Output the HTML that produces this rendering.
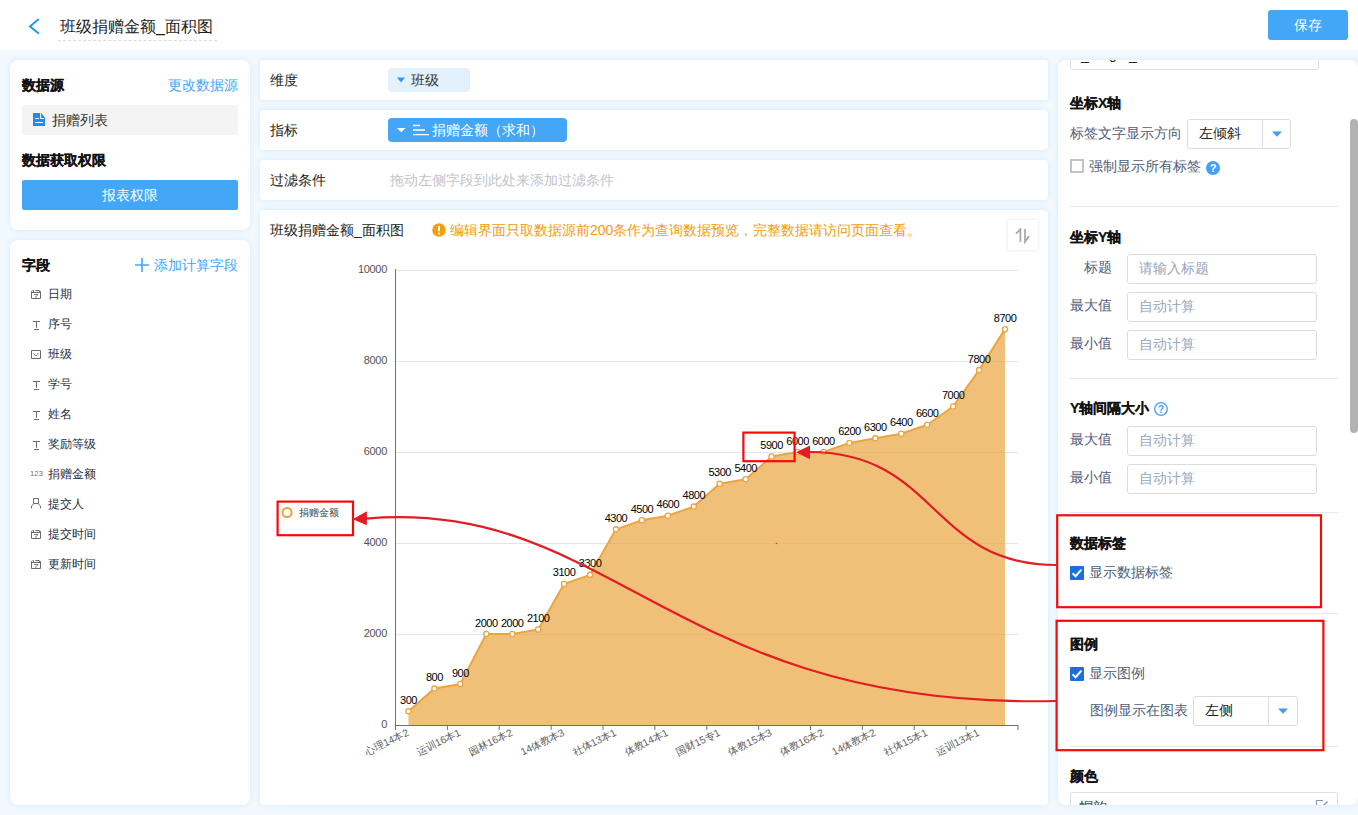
<!DOCTYPE html>
<html><head><meta charset="utf-8">
<style>
*{margin:0;padding:0;box-sizing:border-box}
html,body{width:1358px;height:815px;overflow:hidden}
body{background:#f2f9fe;font-family:"Liberation Sans",sans-serif;font-size:14px;color:#333;position:relative}
.a{position:absolute;white-space:nowrap}
.card{position:absolute;background:#fff;box-shadow:0 0 6px rgba(0,140,255,0.13)}
.hdr{position:absolute;left:0;top:0;width:1358px;height:50px;background:#fff}
.btn{position:absolute;background:#43a6f7;color:#fff;text-align:center;border-radius:3px}
.bold{font-weight:bold;color:#111;-webkit-text-stroke:0.2px #111}
.fld{position:absolute;left:48px;font-size:12px;color:#1f2d3d;line-height:14px}
.ic{position:absolute;left:30px}
.lbl{color:#4e5d7a}
.inp{position:absolute;border:1px solid #dcdcdc;border-radius:3px;background:#fff}
.ph{position:absolute;color:#97a5bd;font-size:14px}
.div{position:absolute;height:1px;background:#e6e9ee;left:1070px;width:268px}
.chk{position:absolute;width:14px;height:14px;border-radius:2px}
</style></head><body>

<!-- header -->
<div class="hdr"></div>
<svg class="a" style="left:26px;top:16px" width="16" height="20" viewBox="0 0 16 20"><path d="M12.2 3.6 L4 10.4 L12.2 17.1" fill="none" stroke="#2196f3" stroke-width="2" stroke-linecap="round" stroke-linejoin="miter"/></svg>
<div class="a" style="left:60px;top:16.5px;font-size:16px;line-height:20px;color:#222">班级捐赠金额_面积图</div>
<div class="a" style="left:58px;top:40px;width:159px;height:0;border-top:1px dashed #dcdcdc"></div>
<div class="btn" style="left:1268px;top:10px;width:80px;height:30px;line-height:30px">保存</div>

<!-- left card 1 -->
<div class="card" style="left:10px;top:60px;width:240px;height:170px;border-radius:8px"></div>
<div class="a bold" style="left:22px;top:77px;line-height:16px">数据源</div>
<div class="a" style="left:168px;top:77px;line-height:16px;color:#43a6f7">更改数据源</div>
<div class="a" style="left:22px;top:105px;width:216px;height:30px;background:#f4f4f5;border-radius:2px"></div>
<svg class="a" style="left:33px;top:113px" width="12" height="13" viewBox="0 0 12 13"><path d="M0 0H8.2L12 4.8V13H0Z" fill="#1a8cf7"/><path d="M7.6 0V5.5H11M2.1 5.5H5.9M2.1 9.5H10" fill="none" stroke="#fff" stroke-width="1"/></svg>
<div class="a" style="left:52px;top:112px;line-height:16px;color:#333">捐赠列表</div>
<div class="a bold" style="left:22px;top:152px;line-height:16px">数据获取权限</div>
<div class="btn" style="left:22px;top:180px;width:216px;height:30px;line-height:30px;border-radius:2px">报表权限</div>

<!-- left card 2 -->
<div class="card" style="left:10px;top:240px;width:240px;height:565px;border-radius:8px"></div>
<div class="a bold" style="left:22px;top:257px;line-height:16px">字段</div>
<svg class="a" style="left:135px;top:258px" width="14" height="14" viewBox="0 0 14 14"><path d="M7 0V14M0 7H14" stroke="#43a6f7" stroke-width="1.6"/></svg>
<div class="a" style="left:154px;top:257px;line-height:16px;color:#43a6f7">添加计算字段</div>

<div class="fld" style="top:287px">日期</div>
<svg class="a" style="left:31px;top:290px" width="11" height="10" viewBox="0 0 11 10"><path d="M0.5 1.2V8.5H9.5V1.2M0.5 2.5H9.5M4.5 0.5H8" fill="none" stroke="#6b6b6b" stroke-width="1"/><path d="M1.5 0.5H2.5V2M8.5 0.5V2" fill="none" stroke="#6b6b6b" stroke-width="1"/><path d="M3 4.5H7L5.5 6.3M4.8 6.3V8.3" fill="none" stroke="#6b6b6b" stroke-width="0.9"/></svg>
<div class="fld" style="top:317px">序号</div>
<svg class="a" style="left:32px;top:321px" width="9" height="10" viewBox="0 0 9 10"><path d="M0.8 0.5H8M4.5 0.5V6.8M2 8.5H7" fill="none" stroke="#6b6b6b" stroke-width="1"/></svg>
<div class="fld" style="top:347px">班级</div>
<svg class="a" style="left:31px;top:350px" width="11" height="10" viewBox="0 0 11 10"><path d="M0.5 0.5H9.5V8.5H0.5Z" fill="none" stroke="#6b6b6b" stroke-width="1"/><path d="M2.3 3.5L4.5 5.5H5.8L6.8 4.5V3" fill="none" stroke="#6b6b6b" stroke-width="0.9"/></svg>
<div class="fld" style="top:377px">学号</div>
<svg class="a" style="left:32px;top:381px" width="9" height="10" viewBox="0 0 9 10"><path d="M0.8 0.5H8M4.5 0.5V6.8M2 8.5H7" fill="none" stroke="#6b6b6b" stroke-width="1"/></svg>
<div class="fld" style="top:407px">姓名</div>
<svg class="a" style="left:32px;top:411px" width="9" height="10" viewBox="0 0 9 10"><path d="M0.8 0.5H8M4.5 0.5V6.8M2 8.5H7" fill="none" stroke="#6b6b6b" stroke-width="1"/></svg>
<div class="fld" style="top:437px">奖励等级</div>
<svg class="a" style="left:32px;top:441px" width="9" height="10" viewBox="0 0 9 10"><path d="M0.8 0.5H8M4.5 0.5V6.8M2 8.5H7" fill="none" stroke="#6b6b6b" stroke-width="1"/></svg>
<div class="fld" style="top:467px">捐赠金额</div>
<div class="a" style="left:30px;top:469px;font-size:7.5px;line-height:9px;color:#6b6b6b;letter-spacing:0.2px">123</div>
<div class="fld" style="top:497px">提交人</div>
<svg class="a" style="left:31px;top:498px" width="11" height="12" viewBox="0 0 11 12"><path d="M2.5 0.5H7.5V5.5H2.5Z" fill="none" stroke="#6b6b6b" stroke-width="1"/><path d="M0.5 10.5V8L2.8 5.8M7.2 5.8L9.5 8V10.5" fill="none" stroke="#6b6b6b" stroke-width="1"/></svg>
<div class="fld" style="top:527px">提交时间</div>
<svg class="a" style="left:31px;top:530px" width="11" height="10" viewBox="0 0 11 10"><path d="M0.5 1.2V8.5H9.5V1.2M0.5 2.5H9.5M4.5 0.5H8" fill="none" stroke="#6b6b6b" stroke-width="1"/><path d="M1.5 0.5H2.5V2M8.5 0.5V2" fill="none" stroke="#6b6b6b" stroke-width="1"/><path d="M3 4.5H7L5.5 6.3M4.8 6.3V8.3" fill="none" stroke="#6b6b6b" stroke-width="0.9"/></svg>
<div class="fld" style="top:557px">更新时间</div>
<svg class="a" style="left:31px;top:560px" width="11" height="10" viewBox="0 0 11 10"><path d="M0.5 1.2V8.5H9.5V1.2M0.5 2.5H9.5M4.5 0.5H8" fill="none" stroke="#6b6b6b" stroke-width="1"/><path d="M1.5 0.5H2.5V2M8.5 0.5V2" fill="none" stroke="#6b6b6b" stroke-width="1"/><path d="M3 4.5H7L5.5 6.3M4.8 6.3V8.3" fill="none" stroke="#6b6b6b" stroke-width="0.9"/></svg>

<!-- middle rows -->
<div class="card" style="left:260px;top:60px;width:788px;height:40px;border-radius:4px"></div>
<div class="a" style="left:270px;top:72px;line-height:16px;color:#222">维度</div>
<div class="a" style="left:388px;top:68px;width:82px;height:24px;background:#e3f1fd;border-radius:4px"></div>
<svg class="a" style="left:397px;top:77px" width="8" height="6"><path d="M0 0.5H8L4 5.5Z" fill="#2b9af3"/></svg>
<div class="a" style="left:411px;top:72px;line-height:16px;color:#333">班级</div>

<div class="card" style="left:260px;top:110px;width:788px;height:40px;border-radius:4px"></div>
<div class="a" style="left:270px;top:122px;line-height:16px;color:#222">指标</div>
<div class="a" style="left:388px;top:118px;width:179px;height:24px;background:#43a6f7;border-radius:4px"></div>
<svg class="a" style="left:396.5px;top:127px" width="9" height="6"><path d="M0 1H8.6L4.3 5.2Z" fill="#fff"/></svg>
<svg class="a" style="left:412px;top:124px" width="18" height="12"><path d="M1 1.5H8M1 6H13M1 10.6H17" stroke="#fff" stroke-width="1.3"/></svg>
<div class="a" style="left:432px;top:122px;line-height:16px;color:#fff">捐赠金额<span style="letter-spacing:0">（求和）</span></div>

<div class="card" style="left:260px;top:160px;width:788px;height:40px;border-radius:4px"></div>
<div class="a" style="left:270px;top:172px;line-height:16px;color:#222">过滤条件</div>
<div class="a" style="left:390px;top:172px;line-height:16px;color:#c0c4cc">拖动左侧字段到此处来添加过滤条件</div>

<!-- chart card -->
<div class="card" style="left:260px;top:210px;width:788px;height:595px;border-radius:4px"></div>
<div class="a" style="left:270px;top:222px;line-height:16px;color:#222">班级捐赠金额_面积图</div>
<svg class="a" style="left:432px;top:223px" width="14" height="14" viewBox="0 0 14 14"><circle cx="7" cy="7" r="6.8" fill="#f59e0b"/><path d="M7 3V8.3" stroke="#fff" stroke-width="2"/><circle cx="7" cy="10.6" r="1.1" fill="#fff"/></svg>
<div class="a" style="left:450px;top:222px;line-height:16px;color:#f29d0b">编辑界面只取数据源前200条作为查询数据预览，完整数据请访问页面查看。</div>
<div class="a" style="left:1008px;top:220px;width:30px;height:30px;background:#fff;box-shadow:0 0 3px rgba(0,0,0,0.12)"></div>
<svg class="a" style="left:1014px;top:228px" width="18" height="16"><path d="M2 5.6L6.4 1.2V14M11 1V14L15 8" fill="none" stroke="#a6a6a6" stroke-width="1.7"/></svg>

<svg id="chart" class="a" style="left:0;top:0;font-family:'Liberation Sans',sans-serif" width="1358" height="815">
<path d="M395.5 634.5H1018" stroke="#e0e6f1" stroke-width="1"/>
<path d="M395.5 543.5H1018" stroke="#e0e6f1" stroke-width="1"/>
<path d="M395.5 452.5H1018" stroke="#e0e6f1" stroke-width="1"/>
<path d="M395.5 361.5H1018" stroke="#e0e6f1" stroke-width="1"/>
<path d="M395.5 270.5H1018" stroke="#e0e6f1" stroke-width="1"/>
<path d="M408.47 725 L408.47 711.35 L434.41 688.60 L460.34 684.05 L486.28 634.00 L512.22 634.00 L538.16 629.45 L564.09 583.95 L590.03 574.85 L615.97 529.35 L641.91 520.25 L667.84 515.70 L693.78 506.60 L719.72 483.85 L745.66 479.30 L771.59 456.55 L797.53 452.00 L823.47 452.00 L849.41 442.90 L875.34 438.35 L901.28 433.80 L927.22 424.70 L953.16 406.50 L979.09 370.10 L1005.03 329.15 L1005.03 725Z" fill="#eaa540" fill-opacity="0.7"/>
<path d="M408.47 711.35 L434.41 688.60 L460.34 684.05 L486.28 634.00 L512.22 634.00 L538.16 629.45 L564.09 583.95 L590.03 574.85 L615.97 529.35 L641.91 520.25 L667.84 515.70 L693.78 506.60 L719.72 483.85 L745.66 479.30 L771.59 456.55 L797.53 452.00 L823.47 452.00 L849.41 442.90 L875.34 438.35 L901.28 433.80 L927.22 424.70 L953.16 406.50 L979.09 370.10 L1005.03 329.15" fill="none" stroke="#eaa540" stroke-width="2" stroke-linejoin="round"/>
<circle cx="408.47" cy="711.35" r="2.6" fill="#fff" stroke="#eaa540" stroke-width="1.3"/>
<circle cx="434.41" cy="688.60" r="2.6" fill="#fff" stroke="#eaa540" stroke-width="1.3"/>
<circle cx="460.34" cy="684.05" r="2.6" fill="#fff" stroke="#eaa540" stroke-width="1.3"/>
<circle cx="486.28" cy="634.00" r="2.6" fill="#fff" stroke="#eaa540" stroke-width="1.3"/>
<circle cx="512.22" cy="634.00" r="2.6" fill="#fff" stroke="#eaa540" stroke-width="1.3"/>
<circle cx="538.16" cy="629.45" r="2.6" fill="#fff" stroke="#eaa540" stroke-width="1.3"/>
<circle cx="564.09" cy="583.95" r="2.6" fill="#fff" stroke="#eaa540" stroke-width="1.3"/>
<circle cx="590.03" cy="574.85" r="2.6" fill="#fff" stroke="#eaa540" stroke-width="1.3"/>
<circle cx="615.97" cy="529.35" r="2.6" fill="#fff" stroke="#eaa540" stroke-width="1.3"/>
<circle cx="641.91" cy="520.25" r="2.6" fill="#fff" stroke="#eaa540" stroke-width="1.3"/>
<circle cx="667.84" cy="515.70" r="2.6" fill="#fff" stroke="#eaa540" stroke-width="1.3"/>
<circle cx="693.78" cy="506.60" r="2.6" fill="#fff" stroke="#eaa540" stroke-width="1.3"/>
<circle cx="719.72" cy="483.85" r="2.6" fill="#fff" stroke="#eaa540" stroke-width="1.3"/>
<circle cx="745.66" cy="479.30" r="2.6" fill="#fff" stroke="#eaa540" stroke-width="1.3"/>
<circle cx="771.59" cy="456.55" r="2.6" fill="#fff" stroke="#eaa540" stroke-width="1.3"/>
<circle cx="797.53" cy="452.00" r="2.6" fill="#fff" stroke="#eaa540" stroke-width="1.3"/>
<circle cx="823.47" cy="452.00" r="2.6" fill="#fff" stroke="#eaa540" stroke-width="1.3"/>
<circle cx="849.41" cy="442.90" r="2.6" fill="#fff" stroke="#eaa540" stroke-width="1.3"/>
<circle cx="875.34" cy="438.35" r="2.6" fill="#fff" stroke="#eaa540" stroke-width="1.3"/>
<circle cx="901.28" cy="433.80" r="2.6" fill="#fff" stroke="#eaa540" stroke-width="1.3"/>
<circle cx="927.22" cy="424.70" r="2.6" fill="#fff" stroke="#eaa540" stroke-width="1.3"/>
<circle cx="953.16" cy="406.50" r="2.6" fill="#fff" stroke="#eaa540" stroke-width="1.3"/>
<circle cx="979.09" cy="370.10" r="2.6" fill="#fff" stroke="#eaa540" stroke-width="1.3"/>
<circle cx="1005.03" cy="329.15" r="2.6" fill="#fff" stroke="#eaa540" stroke-width="1.3"/>
<path d="M395.5 269V725" stroke="#6e7079" stroke-width="1"/>
<path d="M395.5 725.5H1018" stroke="#6e7079" stroke-width="1"/>
<path d="M395.5 725V730" stroke="#6e7079" stroke-width="1"/>
<path d="M447.4 725V730" stroke="#6e7079" stroke-width="1"/>
<path d="M499.2 725V730" stroke="#6e7079" stroke-width="1"/>
<path d="M551.1 725V730" stroke="#6e7079" stroke-width="1"/>
<path d="M603.0 725V730" stroke="#6e7079" stroke-width="1"/>
<path d="M654.9 725V730" stroke="#6e7079" stroke-width="1"/>
<path d="M706.8 725V730" stroke="#6e7079" stroke-width="1"/>
<path d="M758.6 725V730" stroke="#6e7079" stroke-width="1"/>
<path d="M810.5 725V730" stroke="#6e7079" stroke-width="1"/>
<path d="M862.4 725V730" stroke="#6e7079" stroke-width="1"/>
<path d="M914.2 725V730" stroke="#6e7079" stroke-width="1"/>
<path d="M966.1 725V730" stroke="#6e7079" stroke-width="1"/>
<path d="M1018.0 725V730" stroke="#6e7079" stroke-width="1"/>
<text x="387" y="728.3" text-anchor="end" font-size="11" fill="#555" letter-spacing="-0.3">0</text>
<text x="387" y="637.3" text-anchor="end" font-size="11" fill="#555" letter-spacing="-0.3">2000</text>
<text x="387" y="546.3" text-anchor="end" font-size="11" fill="#555" letter-spacing="-0.3">4000</text>
<text x="387" y="455.3" text-anchor="end" font-size="11" fill="#555" letter-spacing="-0.3">6000</text>
<text x="387" y="364.3" text-anchor="end" font-size="11" fill="#555" letter-spacing="-0.3">8000</text>
<text x="387" y="273.3" text-anchor="end" font-size="11" fill="#555" letter-spacing="-0.3">10000</text>
<text x="408.47" y="703.85" text-anchor="middle" font-size="11" fill="#000" letter-spacing="-0.5">300</text>
<text x="434.41" y="681.10" text-anchor="middle" font-size="11" fill="#000" letter-spacing="-0.5">800</text>
<text x="460.34" y="676.55" text-anchor="middle" font-size="11" fill="#000" letter-spacing="-0.5">900</text>
<text x="486.28" y="626.50" text-anchor="middle" font-size="11" fill="#000" letter-spacing="-0.5">2000</text>
<text x="512.22" y="626.50" text-anchor="middle" font-size="11" fill="#000" letter-spacing="-0.5">2000</text>
<text x="538.16" y="621.95" text-anchor="middle" font-size="11" fill="#000" letter-spacing="-0.5">2100</text>
<text x="564.09" y="576.45" text-anchor="middle" font-size="11" fill="#000" letter-spacing="-0.5">3100</text>
<text x="590.03" y="567.35" text-anchor="middle" font-size="11" fill="#000" letter-spacing="-0.5">3300</text>
<text x="615.97" y="521.85" text-anchor="middle" font-size="11" fill="#000" letter-spacing="-0.5">4300</text>
<text x="641.91" y="512.75" text-anchor="middle" font-size="11" fill="#000" letter-spacing="-0.5">4500</text>
<text x="667.84" y="508.20" text-anchor="middle" font-size="11" fill="#000" letter-spacing="-0.5">4600</text>
<text x="693.78" y="499.10" text-anchor="middle" font-size="11" fill="#000" letter-spacing="-0.5">4800</text>
<text x="719.72" y="476.35" text-anchor="middle" font-size="11" fill="#000" letter-spacing="-0.5">5300</text>
<text x="745.66" y="471.80" text-anchor="middle" font-size="11" fill="#000" letter-spacing="-0.5">5400</text>
<text x="771.59" y="449.05" text-anchor="middle" font-size="11" fill="#000" letter-spacing="-0.5">5900</text>
<text x="797.53" y="444.50" text-anchor="middle" font-size="11" fill="#000" letter-spacing="-0.5">6000</text>
<text x="823.47" y="444.50" text-anchor="middle" font-size="11" fill="#000" letter-spacing="-0.5">6000</text>
<text x="849.41" y="435.40" text-anchor="middle" font-size="11" fill="#000" letter-spacing="-0.5">6200</text>
<text x="875.34" y="430.85" text-anchor="middle" font-size="11" fill="#000" letter-spacing="-0.5">6300</text>
<text x="901.28" y="426.30" text-anchor="middle" font-size="11" fill="#000" letter-spacing="-0.5">6400</text>
<text x="927.22" y="417.20" text-anchor="middle" font-size="11" fill="#000" letter-spacing="-0.5">6600</text>
<text x="953.16" y="399.00" text-anchor="middle" font-size="11" fill="#000" letter-spacing="-0.5">7000</text>
<text x="979.09" y="362.60" text-anchor="middle" font-size="11" fill="#000" letter-spacing="-0.5">7800</text>
<text x="1005.03" y="321.65" text-anchor="middle" font-size="11" fill="#000" letter-spacing="-0.5">8700</text>
<text transform="translate(409.47 735) rotate(-26)" text-anchor="end" font-size="10.2" fill="#606060">心理14本2</text>
<text transform="translate(461.34 735) rotate(-26)" text-anchor="end" font-size="10.2" fill="#606060">运训16本1</text>
<text transform="translate(513.22 735) rotate(-26)" text-anchor="end" font-size="10.2" fill="#606060">园林16本2</text>
<text transform="translate(565.09 735) rotate(-26)" text-anchor="end" font-size="10.2" fill="#606060">14体教本3</text>
<text transform="translate(616.97 735) rotate(-26)" text-anchor="end" font-size="10.2" fill="#606060">社体13本1</text>
<text transform="translate(668.84 735) rotate(-26)" text-anchor="end" font-size="10.2" fill="#606060">体教14本1</text>
<text transform="translate(720.72 735) rotate(-26)" text-anchor="end" font-size="10.2" fill="#606060">国财15专1</text>
<text transform="translate(772.59 735) rotate(-26)" text-anchor="end" font-size="10.2" fill="#606060">体教15本3</text>
<text transform="translate(824.47 735) rotate(-26)" text-anchor="end" font-size="10.2" fill="#606060">体教16本2</text>
<text transform="translate(876.34 735) rotate(-26)" text-anchor="end" font-size="10.2" fill="#606060">14体教本2</text>
<text transform="translate(928.22 735) rotate(-26)" text-anchor="end" font-size="10.2" fill="#606060">社体15本1</text>
<text transform="translate(980.09 735) rotate(-26)" text-anchor="end" font-size="10.2" fill="#606060">运训13本1</text>

</svg>

<!-- right panel -->
<div class="card" style="left:1058px;top:60px;width:300px;height:745px;border-radius:8px;overflow:hidden" id="rp"></div>
<div class="a" style="left:1058px;top:60px;width:300px;height:12px;overflow:hidden"><div class="a" style="left:12px;top:-22px;width:249px;height:32px;border:1px solid #dcdfe6;border-radius:3px"></div><div class="a" style="left:23px;top:-13.5px;line-height:16px;color:#222">_</div><div class="a" style="left:51px;top:-14.5px;line-height:16px;color:#222">g</div><div class="a" style="left:71px;top:-13.5px;line-height:16px;color:#222">_</div></div>
<div class="a bold" style="left:1070px;top:95px;line-height:16px">坐标X轴</div>
<div class="a lbl" style="left:1070px;top:125px;line-height:16px;">标签文字显示方向</div>
<div class="inp" style="left:1187px;top:119px;width:104px;height:30px"></div>
<div class="a" style="left:1262px;top:120px;width:1px;height:28px;background:#dcdfe6"></div>
<div class="a" style="left:1199px;top:125px;line-height:16px;color:#222">左倾斜</div>
<svg class="a" style="left:1271.5px;top:131.0px" width="10" height="6"><path d="M0 0.5H10L5 5.8Z" fill="#3d9df5"/></svg>
<div class="a" style="left:1070px;top:159px;width:14px;height:14px;border:2px solid #c3c3c3;background:#fff"></div>
<div class="a lbl" style="left:1089px;top:158px;line-height:16px;">强制显示所有标签</div>
<svg class="a" style="left:1206px;top:161px" width="14" height="14"><circle cx="7" cy="7" r="7" fill="#42a0f5"/><text x="7" y="11.3" text-anchor="middle" font-size="11" font-weight="bold" fill="#fff" font-family="Liberation Sans">?</text></svg>
<div class="div" style="top:206px"></div>
<div class="a bold" style="left:1070px;top:229px;line-height:16px">坐标Y轴</div>
<div class="a lbl" style="left:1084px;top:259px;line-height:16px;">标题</div>
<div class="a lbl" style="left:1070px;top:297px;line-height:16px;">最大值</div>
<div class="a lbl" style="left:1070px;top:335px;line-height:16px;">最小值</div>
<div class="inp" style="left:1127px;top:254px;width:190px;height:30px"></div>
<div class="a ph" style="left:1139px;top:260px;line-height:16px">请输入标题</div>
<div class="inp" style="left:1127px;top:292px;width:190px;height:30px"></div>
<div class="a ph" style="left:1139px;top:298px;line-height:16px">自动计算</div>
<div class="inp" style="left:1127px;top:330px;width:190px;height:30px"></div>
<div class="a ph" style="left:1139px;top:336px;line-height:16px">自动计算</div>
<div class="div" style="top:378px"></div>
<div class="a bold" style="left:1070px;top:400px;line-height:16px">Y轴间隔大小</div>
<svg class="a" style="left:1154px;top:402px" width="14" height="14"><circle cx="7" cy="7" r="6.3" fill="none" stroke="#42a0f5" stroke-width="1.3"/><text x="7" y="10.6" text-anchor="middle" font-size="10" font-weight="bold" fill="#42a0f5" font-family="Liberation Sans">?</text></svg>
<div class="a lbl" style="left:1070px;top:431px;line-height:16px;">最大值</div>
<div class="a lbl" style="left:1070px;top:469px;line-height:16px;">最小值</div>
<div class="inp" style="left:1127px;top:426px;width:190px;height:30px"></div>
<div class="a ph" style="left:1139px;top:432px;line-height:16px">自动计算</div>
<div class="inp" style="left:1127px;top:464px;width:190px;height:30px"></div>
<div class="a ph" style="left:1139px;top:470px;line-height:16px">自动计算</div>
<div class="div" style="top:512px"></div>
<div class="a bold" style="left:1070px;top:535px;line-height:16px">数据标签</div>
<svg class="a" style="left:1070px;top:566px" width="14" height="14"><rect width="14" height="14" rx="1" fill="#1a6fdf"/><path d="M2.6 7.2L5.6 10.2L11.4 3.6" fill="none" stroke="#fff" stroke-width="2"/></svg>
<div class="a lbl" style="left:1089px;top:564px;line-height:16px;">显示数据标签</div>
<div class="div" style="top:613px"></div>
<div class="a bold" style="left:1070px;top:636px;line-height:16px">图例</div>
<svg class="a" style="left:1070px;top:667px" width="14" height="14"><rect width="14" height="14" rx="1" fill="#1a6fdf"/><path d="M2.6 7.2L5.6 10.2L11.4 3.6" fill="none" stroke="#fff" stroke-width="2"/></svg>
<div class="a lbl" style="left:1089px;top:665px;line-height:16px;">显示图例</div>
<div class="a lbl" style="left:1090px;top:702px;line-height:16px;">图例显示在图表</div>
<div class="inp" style="left:1193px;top:696px;width:105px;height:30px"></div>
<div class="a" style="left:1268px;top:697px;width:1px;height:28px;background:#dcdfe6"></div>
<div class="a" style="left:1205px;top:702px;line-height:16px;color:#222">左侧</div>
<svg class="a" style="left:1278.0px;top:708.0px" width="10" height="6"><path d="M0 0.5H10L5 5.8Z" fill="#3d9df5"/></svg>
<div class="div" style="top:746px"></div>
<div class="a bold" style="left:1070px;top:768px;line-height:16px">颜色</div>
<div class="a" style="left:1058px;top:790px;width:300px;height:15px;overflow:hidden"><div class="a" style="left:12px;top:2px;width:268px;height:30px;border:1px solid #dcdfe6;border-radius:3px"></div><div class="a" style="left:21px;top:9px;line-height:16px;color:#333">帽韵</div><svg class="a" style="left:257px;top:9px" width="14" height="12"><path d="M8 1.5H1.5V11" fill="none" stroke="#8a9bb5" stroke-width="1.2"/><path d="M7 8L12.5 2.5" stroke="#8a9bb5" stroke-width="1.5"/></svg></div>
<div class="a" style="left:1350px;top:119px;width:8px;height:314px;background:#b3b3b3;border-radius:4px"></div>

<!-- legend -->
<svg class="a" style="left:0;top:0" width="1358" height="815">
<circle cx="287" cy="512.5" r="4.6" fill="#fff" stroke="#e9a33c" stroke-width="2"/>
<text x="298.5" y="515.8" font-size="10" fill="#444" font-family="Liberation Sans">捐赠金额</text>
<circle cx="776.5" cy="543.5" r="0.8" fill="#ff2020"/>
<g fill="none" stroke="#f50a0a" stroke-width="2.2">
<rect x="277.6" y="501.6" width="75.4" height="33.6"/>
<rect x="743.4" y="432.6" width="51.2" height="28.6"/>
<rect x="1057.2" y="515.3" width="263.8" height="91.9"/>
<rect x="1056.6" y="620.8" width="266.8" height="129.4"/>
</g>
<g fill="none" stroke="#e31b23" stroke-width="2.2">
<path d="M1057 565 C929.4 565 938 452 809 452"/>
<path d="M1056 701 C672.9 709.8 612.7 497.5 366 518.6"/>
</g>
<g fill="#e31b23">
<path d="M796 452.3L810 445.4V459.2Z"/>
<path d="M352.6 519.2L366.9 511.2V525.2Z"/>
</g>
</svg>
</body></html>
